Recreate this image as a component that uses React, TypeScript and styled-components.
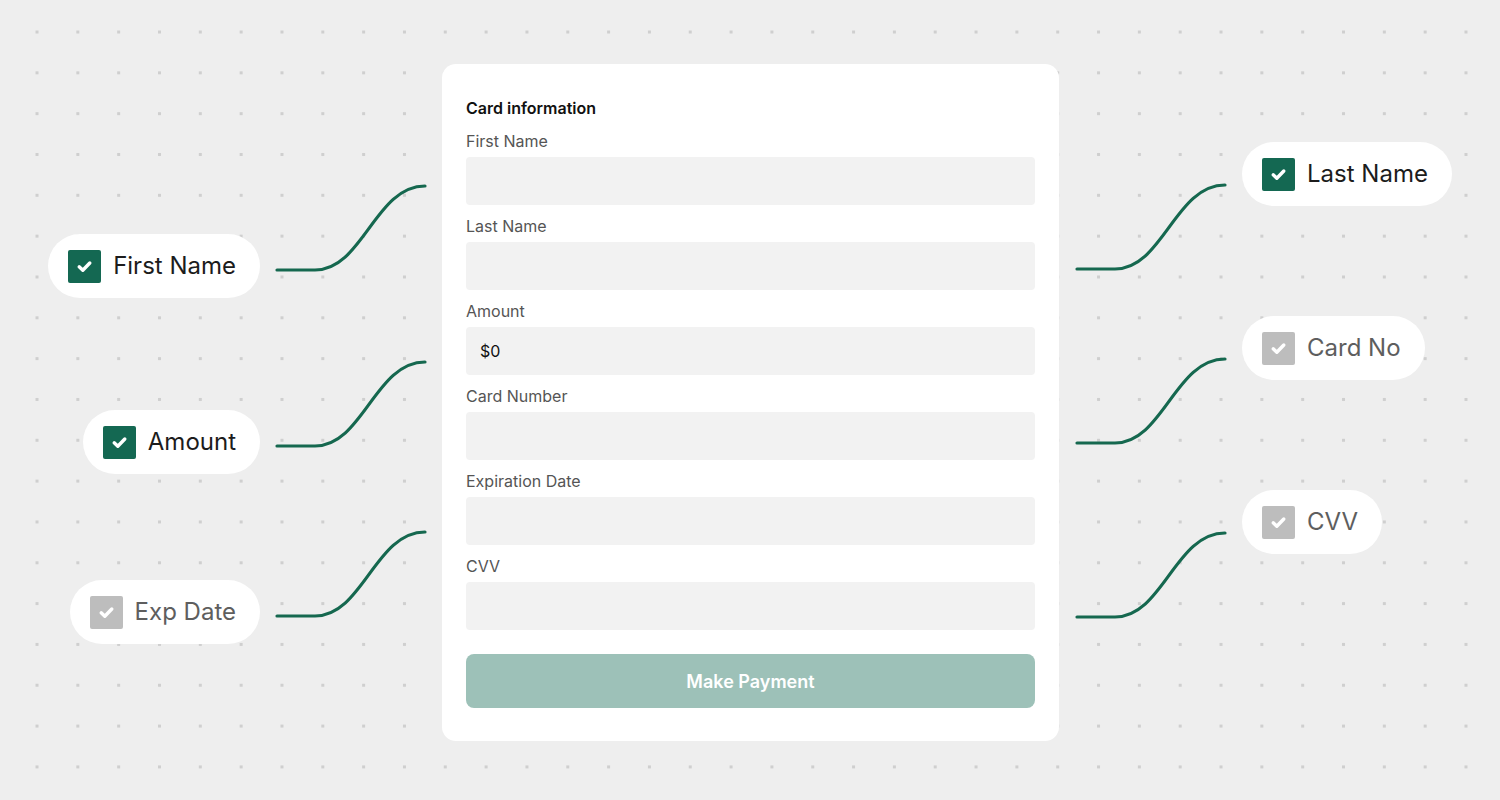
import React from "react";
import styled, { createGlobalStyle } from "styled-components";

const GlobalStyle = createGlobalStyle`
  html, body {
    margin: 0;
    padding: 0;
    width: 1500px;
    height: 800px;
    overflow: hidden;
    font-family: Inter, "Noto Sans", "Liberation Sans", sans-serif;
  }
  body {
    background-color: #eeeeee;
    background-image: radial-gradient(circle, #cfcfcf 1.5px, transparent 2px);
    background-size: 40.83px 40.83px;
    background-position: 16.6px 11.6px;
  }
  * { box-sizing: border-box; }
`;

const Page = styled.div`
  display: grid;
  grid-template-columns: 442px 617px 1fr;
  width: 1500px;
  height: 800px;
  padding-top: 64px;
`;

const LeftColumn = styled.div`
  display: flex;
  flex-direction: column;
  align-items: flex-end;
  padding-top: 120px;
  padding-right: 15px;
`;

const RightColumn = styled.div`
  display: flex;
  flex-direction: column;
  align-items: flex-start;
  padding-top: 78px;
  padding-left: 16px;
  gap: 45px;
`;

const Row = styled.div<{ $top?: number }>`
  display: flex;
  align-items: flex-start;
  gap: 15px;
  margin-top: ${(p) => p.$top ?? 0}px;
`;

const Pill = styled.div<{ $offset?: number }>`
  display: flex;
  align-items: center;
  gap: 12px;
  height: 64px;
  padding: 0 24px 0 20px;
  border-radius: 32px;
  background: #ffffff;
  margin-top: ${(p) => p.$offset ?? 0}px;
`;

const Box = styled.div<{ $on: boolean }>`
  width: 33px;
  height: 33px;
  border-radius: 2px;
  background: ${(p) => (p.$on ? "#146852" : "#bdbdbd")};
  display: flex;
  align-items: center;
  justify-content: center;
  flex: none;
`;

const PillText = styled.span<{ $on: boolean }>`
  font-size: 24px;
  line-height: 30px;
  color: ${(p) => (p.$on ? "#1c1c1c" : "#5e5e5e")};
  white-space: nowrap;
`;

const Connector = styled.svg<{ $offset?: number }>`
  display: block;
  flex: none;
  margin-top: ${(p) => p.$offset ?? 0}px;
`;

const Card = styled.form`
  background: #ffffff;
  border-radius: 14px;
  height: 677px;
  padding: 34px 24px 0 24px;
  display: flex;
  flex-direction: column;
`;

const Title = styled.h2`
  margin: 0 0 13px 0;
  font-size: 16px;
  line-height: 20px;
  font-weight: 600;
  color: #111111;
`;

const Fields = styled.div`
  display: flex;
  flex-direction: column;
  gap: 11px;
`;

const Field = styled.label`
  display: flex;
  flex-direction: column;
  gap: 6px;
`;

const Label = styled.span`
  font-size: 16px;
  line-height: 20px;
  color: #555555;
`;

const Input = styled.div`
  height: 48px;
  border-radius: 4px;
  background: #f2f2f2;
  display: flex;
  align-items: center;
  padding-left: 14px;
  font-size: 16px;
  color: #111111;
`;

const PayButton = styled.button`
  margin-top: 24px;
  height: 54px;
  border: none;
  border-radius: 8px;
  background: #9dc1b8;
  color: #ffffff;
  font-family: Inter, "Noto Sans", sans-serif;
  font-size: 18px;
  font-weight: 600;
  cursor: default;
`;

const Check = () => (
  <svg width="33" height="33" viewBox="0 0 33 33">
    <polyline
      points="11.2,16.8 14.8,20.2 21.8,13"
      fill="none"
      stroke="#ffffff"
      strokeWidth="3.4"
      strokeLinecap="round"
      strokeLinejoin="round"
    />
  </svg>
);

const Curve = ({ offset }: { offset?: number }) => (
  <Connector $offset={offset} width="152" height="88" viewBox="0 0 152 88">
    <path
      d="M2 86 H40 C88 86 100 2 150 2"
      fill="none"
      stroke="#15684f"
      strokeWidth="3.2"
      strokeLinecap="round"
    />
  </Connector>
);

const Tag = ({ label, on, offset }: { label: string; on: boolean; offset?: number }) => (
  <Pill $offset={offset}>
    <Box $on={on}>
      <Check />
    </Box>
    <PillText $on={on}>{label}</PillText>
  </Pill>
);

const fields: { label: string; value?: string }[] = [
  { label: "First Name" },
  { label: "Last Name" },
  { label: "Amount", value: "$0" },
  { label: "Card Number" },
  { label: "Expiration Date" },
  { label: "CVV" },
];

export default function App() {
  return (
    <>
      <GlobalStyle />
      <Page>
        <LeftColumn>
          <Row>
            <Tag label="First Name" on offset={50} />
            <Curve />
          </Row>
          <Row $top={62}>
            <Tag label="Amount" on offset={50} />
            <Curve />
          </Row>
          <Row $top={56}>
            <Tag label="Exp Date" on={false} offset={50} />
            <Curve />
          </Row>
        </LeftColumn>

        <Card onSubmit={(e) => e.preventDefault()}>
          <Title>Card information</Title>
          <Fields>
            {fields.map((f) => (
              <Field key={f.label}>
                <Label>{f.label}</Label>
                <Input>{f.value}</Input>
              </Field>
            ))}
          </Fields>
          <PayButton type="button">Make Payment</PayButton>
        </Card>

        <RightColumn>
          <Row>
            <Curve offset={41} />
            <Tag label="Last Name" on />
          </Row>
          <Row>
            <Curve offset={41} />
            <Tag label="Card No" on={false} />
          </Row>
          <Row>
            <Curve offset={41} />
            <Tag label="CVV" on={false} />
          </Row>
        </RightColumn>
      </Page>
    </>
  );
}
